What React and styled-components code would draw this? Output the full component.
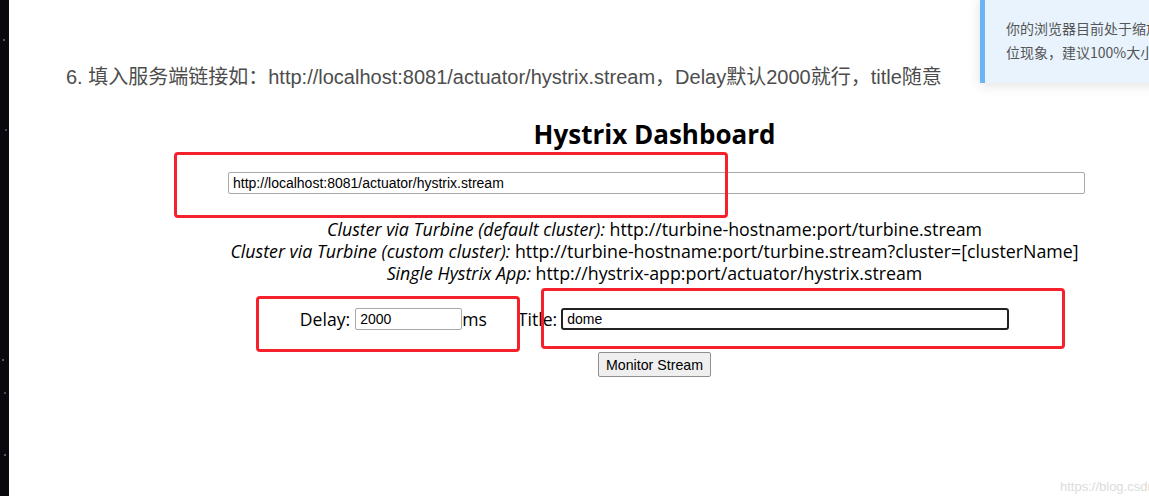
import React from "react";
import styled, { createGlobalStyle } from "styled-components";

const Global = createGlobalStyle`
  html, body { margin: 0; padding: 0; background: #fff; }
  body { font-family: "Liberation Sans", "Noto Sans CJK SC", sans-serif; }
`;

const Page = styled.div`
  position: relative;
  display: flex;
  width: 1149px;
  height: 496px;
  overflow: hidden;
  background: #fff;
`;

const Strip = styled.div`
  flex: 0 0 9px;
  background:
    radial-gradient(circle at 4px 40px, #5a5a66 0 1px, transparent 1.5px),
    radial-gradient(circle at 6px 130px, #4a4a55 0 1px, transparent 1.5px),
    radial-gradient(circle at 3px 360px, #5a5a66 0 1px, transparent 1.5px),
    radial-gradient(circle at 5px 393px, #4a4a55 0 1px, transparent 1.5px),
    radial-gradient(circle at 5px 455px, #5a5a66 0 1px, transparent 1.5px),
    #08080e;
`;

const Main = styled.div`
  flex: 1;
  display: flex;
  flex-direction: column;
`;

const Para = styled.p`
  margin: 0;
  padding: 63px 0 0 57px;
  font-family: "Liberation Sans", "Noto Sans CJK SC", sans-serif;
  font-size: 20px;
  line-height: 28px;
  color: #4d4d4d;
  white-space: nowrap;
`;

const Dashboard = styled.div`
  margin-left: 151px;
  width: 989px;
  display: flex;
  flex-direction: column;
  align-items: center;
  font-family: "Open Sans", "Noto Sans", sans-serif;
  color: #000;
`;

const Heading = styled.h1`
  margin: 27px 0 0;
  font-size: 26px;
  line-height: 32px;
  font-weight: 700;
`;

const TextInput = styled.input`
  box-sizing: border-box;
  width: ${(p) => p.$w}px;
  height: 22px;
  padding: 1px 4px;
  font-family: "Liberation Sans", sans-serif;
  font-size: 14px;
  color: #000;
  background: #fff;
  border: ${(p) => (p.$focused ? "2px solid #222" : "1px solid #a9a9a9")};
  border-radius: ${(p) => (p.$focused ? "3px" : "2px")};
  outline: none;
`;

const UrlInput = styled(TextInput)`
  margin: 22px 0 0 4px;
`;

const Examples = styled.div`
  margin-top: 24px;
  font-size: 17.8px;
  line-height: 22px;
  text-align: center;
  white-space: nowrap;
`;

const Label = styled.i`
  font-style: italic;
`;

const Row = styled.div`
  margin-top: 24px;
  display: flex;
  align-items: center;
  height: 22px;
  font-size: 17.6px;
  white-space: nowrap;
`;

const FieldLabel = styled.span`
  margin: 0 ${(p) => p.$right || 0}px 0 ${(p) => p.$left || 0}px;
`;

const Button = styled.button`
  margin-top: 22px;
  height: 25px;
  padding: 0 7px;
  font-family: "Liberation Sans", sans-serif;
  font-size: 14.2px;
  color: #000;
  background: #efefef;
  border: 1px solid #8f8f8f;
  border-radius: 2px;
`;

const RedBox = styled.div`
  position: absolute;
  left: ${(p) => p.$x}px;
  top: ${(p) => p.$y}px;
  width: ${(p) => p.$w}px;
  height: ${(p) => p.$h}px;
  box-sizing: border-box;
  border: 3px solid #f5222d;
  border-radius: 4px;
  pointer-events: none;
`;

const Notice = styled.div`
  position: absolute;
  left: 980px;
  top: -4px;
  width: 200px;
  height: 87px;
  box-sizing: border-box;
  padding: 20px 0 0 21px;
  background: #e8f3fe;
  border-left: 5px solid #6db5f2;
  box-shadow: 0 2px 12px rgba(0, 0, 0, 0.12);
  font-family: "Noto Sans CJK SC", sans-serif;
  font-size: 14px;
  line-height: 24px;
  color: #555;
  white-space: nowrap;
`;

const Watermark = styled.div`
  position: absolute;
  left: 1060px;
  top: 479px;
  font-family: "Liberation Sans", sans-serif;
  font-size: 13px;
  color: #dcdcdc;
  white-space: nowrap;
`;

export default function App() {
  return (
    <>
      <Global />
      <Page>
        <Strip />
        <Main>
          <Para>
            6. 填入服务端链接如：http://localhost:8081/actuator/hystrix.stream，Delay默认2000就行，title随意
          </Para>
          <Dashboard>
            <Heading>Hystrix Dashboard</Heading>
            <UrlInput $w={857} defaultValue="http://localhost:8081/actuator/hystrix.stream" />
            <Examples>
              <div>
                <Label>Cluster via Turbine (default cluster):</Label> http://turbine-hostname:port/turbine.stream
              </div>
              <div>
                <Label>Cluster via Turbine (custom cluster):</Label> http://turbine-hostname:port/turbine.stream?cluster=[clusterName]
              </div>
              <div>
                <Label>Single Hystrix App:</Label> http://hystrix-app:port/actuator/hystrix.stream
              </div>
            </Examples>
            <Row>
              <FieldLabel $right={5}>Delay:</FieldLabel>
              <TextInput $w={107} defaultValue="2000" />
              <FieldLabel $right={31}>ms</FieldLabel>
              <FieldLabel $right={4}>Title:</FieldLabel>
              <TextInput $w={448} $focused defaultValue="dome" />
            </Row>
            <Button>Monitor Stream</Button>
          </Dashboard>
        </Main>
        <RedBox $x={174} $y={152} $w={554} $h={66} />
        <RedBox $x={256} $y={296} $w={264} $h={56} />
        <RedBox $x={541} $y={288} $w={524} $h={61} />
        <Notice>
          <div>你的浏览器目前处于缩放状态，页面可能会出现错</div>
          <div>位现象，建议100%大小显示。</div>
        </Notice>
        <Watermark>https://blog.csdn.net/weixin</Watermark>
      </Page>
    </>
  );
}
